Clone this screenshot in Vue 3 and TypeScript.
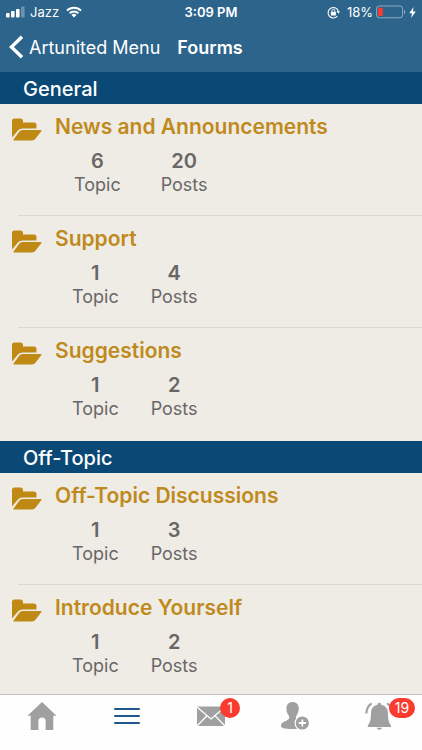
<script setup lang="ts">
interface Forum {
  name: string
  topics: number
  posts: number
}

interface Section {
  title: string
  forums: Forum[]
}

const sections: Section[] = [
  {
    title: 'General',
    forums: [
      { name: 'News and Announcements', topics: 6, posts: 20 },
      { name: 'Support', topics: 1, posts: 4 },
      { name: 'Suggestions', topics: 1, posts: 2 },
    ],
  },
  {
    title: 'Off-Topic',
    forums: [
      { name: 'Off-Topic Discussions', topics: 1, posts: 3 },
      { name: 'Introduce Yourself', topics: 1, posts: 2 },
    ],
  },
]
</script>

<template>
  <div class="screen">
    <header class="top">
      <div class="status">
        <div class="status-left">
          <svg width="19" height="12" viewBox="0 0 19 12" aria-hidden="true">
            <rect x="0" y="7" width="3.6" height="4.5" rx="1" fill="#fff" />
            <rect x="5" y="5" width="3.6" height="6.5" rx="1" fill="#fff" />
            <rect x="10" y="3" width="3.6" height="8.5" rx="1" fill="#fff" />
            <rect x="15" y="0.5" width="3.6" height="11" rx="1" fill="#fff" opacity="0.3" />
          </svg>
          <span class="carrier">Jazz</span>
          <svg width="16" height="12" viewBox="0 0 16 12" aria-hidden="true">
            <g fill="none" stroke="#fff" stroke-width="2">
              <path d="M1 4.6 A10 10 0 0 1 15 4.6" />
              <path d="M3.6 7.3 A6.2 6.2 0 0 1 12.4 7.3" />
            </g>
            <path d="M5.5 9 A3.6 3.6 0 0 1 10.5 9 L8 11.6 Z" fill="#fff" />
          </svg>
        </div>
        <span class="clock">3:09 PM</span>
        <div class="status-right">
          <svg width="13" height="13" viewBox="0 0 13 13" aria-hidden="true">
            <path d="M10.2 10.2 A5.2 5.2 0 1 1 11.4 5.6" fill="none" stroke="#fff" stroke-width="1.1" />
            <path d="M9.5 5.3 L13 5.3 L11.3 7.8 Z" fill="#fff" />
            <rect x="3.9" y="5.8" width="5" height="3.6" rx="0.5" fill="#fff" />
            <path d="M5 6 V4.7 a1.4 1.4 0 0 1 2.8 0 V6" fill="none" stroke="#fff" stroke-width="0.9" />
          </svg>
          <span class="percent">18%</span>
          <svg width="30" height="14" viewBox="0 0 30 14" aria-hidden="true">
            <rect x="0.6" y="1" width="26" height="11.8" rx="2.6" fill="none" stroke="#fff" stroke-opacity="0.45" />
            <rect x="2.2" y="2.7" width="4.6" height="8.4" rx="0.8" fill="#fb3a30" />
            <path d="M28 5 a2.2 2.2 0 0 1 0 4 Z" fill="#fff" opacity="0.5" />
          </svg>
          <svg width="7" height="11" viewBox="0 0 7 11" aria-hidden="true">
            <path d="M4.6 0 L0.3 6.2 H3 L2.2 11 L6.7 4.6 H3.9 Z" fill="#fff" />
          </svg>
        </div>
      </div>
      <nav class="bar">
        <a class="back" href="#menu">
          <svg width="15" height="24" viewBox="0 0 15 24" aria-hidden="true">
            <path d="M13 1.8 L2.4 12 L13 22.2" fill="none" stroke="#fff" stroke-width="3.4" />
          </svg>
          <span>Artunited Menu</span>
        </a>
        <h1 class="title">Fourms</h1>
      </nav>
    </header>

    <main class="content">
      <section v-for="section in sections" :key="section.title">
        <h2 class="section-title">{{ section.title }}</h2>
        <ul class="forums">
          <li v-for="forum in section.forums" :key="forum.name" class="forum">
            <svg class="folder" width="30" height="23" viewBox="0 0 30 23" aria-hidden="true">
              <path d="M0 19.5 V3 Q0 0.5 2.5 0.5 H8.5 Q11 0.5 11 3 V4.5 H22 Q24.5 4.5 24.5 7 V10.5 H10.5 Q7.7 10.5 6 12.5 Z" />
              <path d="M1.8 22.5 Q0.8 22.5 1.6 21.4 L7.2 13.7 Q8.6 12 10.6 12 H28.6 Q30 12 29.2 13.2 L23.5 20.8 Q22 22.5 20 22.5 Z" />
            </svg>
            <div class="forum-body">
              <a class="forum-name" href="#forum">{{ forum.name }}</a>
              <dl class="stats" :class="{ roomy: forum.posts > 9 }">
                <div class="stat">
                  <dt>Topic</dt>
                  <dd>{{ forum.topics }}</dd>
                </div>
                <div class="stat">
                  <dt>Posts</dt>
                  <dd>{{ forum.posts }}</dd>
                </div>
              </dl>
            </div>
          </li>
        </ul>
      </section>
    </main>

    <nav class="tabs">
      <button class="tab" type="button" aria-label="Home">
        <svg width="30" height="30" viewBox="0 0 30 30" aria-hidden="true">
          <path d="M15 1 L29.5 14.7 H26.3 V29 H18.6 V20 a3.6 3.6 0 0 0 -7.2 0 V29 H3.7 V14.7 H0.5 Z" fill="#a0a0a0" />
        </svg>
      </button>
      <button class="tab" type="button" aria-label="Menu">
        <svg width="30" height="30" viewBox="0 0 30 30" aria-hidden="true">
          <path d="M3 8 H27 M3 15 H27 M3 22 H27" stroke="#20588c" stroke-width="2" stroke-linecap="round" />
        </svg>
      </button>
      <button class="tab" type="button" aria-label="Messages">
        <svg width="30" height="30" viewBox="0 0 30 30" aria-hidden="true">
          <rect x="1" y="5.5" width="28" height="19.5" fill="#a0a0a0" />
          <path d="M1 6 L15 18 L29 6 M1 25 L11 14.8 M29 25 L19 14.8" fill="none" stroke="#fff" stroke-width="1.3" />
        </svg>
        <span class="badge">1</span>
      </button>
      <button class="tab" type="button" aria-label="Add friend">
        <svg width="30" height="30" viewBox="0 0 30 30" aria-hidden="true">
          <path d="M12.5 1 C16.8 1 19.1 4 18.8 8 C18.5 11.5 17.4 13 16.4 14.6 C15.3 16.8 16 18.4 18.2 19.3 C20.5 20.4 23 21.5 23.6 24 C24 26.5 22 28 12.5 28 C4 28 1 27 1 25 C1 21.5 4.5 20.6 7.2 19.3 C9.4 18.2 9.8 16.8 8.8 14.8 C7.4 12.8 6.6 11.2 6.4 8 C6.2 4 8.4 1 12.5 1 Z" fill="#a0a0a0" />
          <circle cx="22.3" cy="22" r="7.2" fill="#a0a0a0" stroke="#fff" stroke-width="1.2" />
          <path d="M22.3 18.4 V25.6 M18.7 22 H25.9" stroke="#fff" stroke-width="1.8" />
        </svg>
      </button>
      <button class="tab" type="button" aria-label="Notifications">
        <svg width="30" height="30" viewBox="0 0 30 30" aria-hidden="true">
          <path d="M14.4 1.8 C15.6 1.8 16.2 2.7 16.3 3.8 C20.9 4.6 22.8 8 22.9 12 C23 18 23.5 21 26 24.6 V26 H2.8 V24.6 C5.4 21 5.9 18 6 12 C6.1 8 8 4.6 12.5 3.8 C12.6 2.7 13.2 1.8 14.4 1.8 Z" fill="#a0a0a0" />
          <path d="M11.6 26.8 H17.2 Q16.4 28.8 14.4 28.8 Q12.4 28.8 11.6 26.8 Z" fill="#a0a0a0" />
          <path d="M1.4 12.5 Q1.4 6 6.6 2.4 M27.4 12.5 Q27.4 6 22.2 2.4" fill="none" stroke="#a0a0a0" stroke-width="2.2" />
        </svg>
        <span class="badge">19</span>
      </button>
    </nav>
  </div>
</template>

<style>
body {
  margin: 0;
}
</style>

<style scoped>
.screen {
  display: flex;
  flex-direction: column;
  height: 100vh;
  background: #efece6;
  font-family: Inter, "Liberation Sans", sans-serif;
  color: #696766;
}

.top {
  flex: none;
  background: #2d648c;
  color: #fff;
}

.status {
  display: grid;
  grid-template-columns: 1fr auto 1fr;
  align-items: center;
  height: 24px;
  padding: 0 6px;
  font-size: 13px;
}

.status-left,
.status-right {
  display: flex;
  align-items: center;
}

.status-left {
  gap: 5px;
}

.carrier {
  margin-right: 2px;
}

.status-right {
  justify-content: flex-end;
  gap: 3px;
}

.percent {
  margin-left: 4px;
}

.clock {
  font-weight: 600;
}

.bar {
  display: flex;
  align-items: center;
  gap: 17px;
  height: 46px;
  padding: 0 9px 2px;
}

.back {
  display: flex;
  align-items: center;
  gap: 5px;
  color: #fff;
  font-size: 18px;
  text-decoration: none;
}

.title {
  margin: 0;
  font-size: 18px;
  font-weight: 600;
}

.content {
  flex: 1;
  min-height: 0;
  overflow-y: auto;
  scrollbar-width: none;
}

.section-title {
  margin: 0;
  padding: 2px 23px 0;
  background: #0a4876;
  color: #fff;
  font-size: 20px;
  font-weight: 500;
  line-height: 30px;
}

.forums {
  margin: 0;
  padding: 0 0 1px;
  list-style: none;
}

.forum {
  display: flex;
  gap: 13px;
  height: 112px;
  padding-left: 12px;
  background: linear-gradient(#dad7d3, #dad7d3) 18px 100% / 100% 1px no-repeat;
}

.forum:last-child {
  background: none;
}

.folder {
  flex: none;
  margin-top: 14px;
  fill: #bf8914;
}

.forum-body {
  padding-top: 9px;
}

.forum-name {
  display: block;
  color: #bf8a1c;
  font-size: 21px;
  font-weight: 600;
  line-height: 28px;
  text-decoration: none;
}

.stats {
  display: flex;
  gap: 32px;
  margin: 8px 0 0;
  padding-left: 17px;
}

.stats.roomy {
  gap: 40px;
  padding-left: 19px;
}

.stat {
  display: flex;
  flex-direction: column-reverse;
  text-align: center;
}

.stat dt {
  font-size: 18px;
  line-height: 24px;
}

.stat dd {
  margin: 0;
  font-size: 20px;
  font-weight: 600;
  line-height: 24px;
}

.tabs {
  display: grid;
  flex: none;
  grid-template-columns: repeat(5, 1fr);
  height: 55px;
  border-top: 1px solid #c4c0c0;
  background: #fefefe;
}

.tab {
  position: relative;
  display: flex;
  justify-content: center;
  padding: 6px 0 0;
  border: 0;
  background: none;
  font-family: inherit;
}

.badge {
  position: absolute;
  top: 3px;
  left: 50%;
  box-sizing: border-box;
  min-width: 20px;
  height: 20px;
  margin-left: 9px;
  padding: 0 6px;
  border-radius: 10px;
  background: #fb3a30;
  color: #fff;
  font-size: 14px;
  line-height: 20px;
}
</style>
